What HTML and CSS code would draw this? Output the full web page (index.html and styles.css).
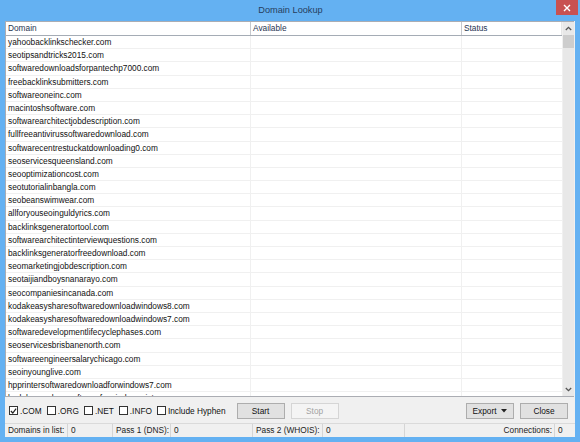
FILE: index.html
```html
<!DOCTYPE html>
<html>
<head>
<meta charset="utf-8">
<link rel="stylesheet" href="styles.css">
</head>
<body>
<div class="window">
  <div class="titlebar">
    <span></span>
    <span class="title">Domain Lookup</span>
    <span class="close"><svg width="8" height="8" viewBox="0 0 8 8"><path d="M1 1L7 7M7 1L1 7" stroke="#fff" stroke-width="1.4"/></svg></span>
  </div>
  <div class="client">
    <div class="list">
      <div class="grid">
        <div class="row head"><div class="cell">Domain</div><div class="cell">Available</div><div class="cell">Status</div></div>
        <div class="row"><div class="cell">yahoobacklinkschecker.com</div><div class="cell"></div><div class="cell"></div></div>
        <div class="row"><div class="cell">seotipsandtricks2015.com</div><div class="cell"></div><div class="cell"></div></div>
        <div class="row"><div class="cell">softwaredownloadsforpantechp7000.com</div><div class="cell"></div><div class="cell"></div></div>
        <div class="row"><div class="cell">freebacklinksubmitters.com</div><div class="cell"></div><div class="cell"></div></div>
        <div class="row"><div class="cell">softwareoneinc.com</div><div class="cell"></div><div class="cell"></div></div>
        <div class="row"><div class="cell">macintoshsoftware.com</div><div class="cell"></div><div class="cell"></div></div>
        <div class="row"><div class="cell">softwarearchitectjobdescription.com</div><div class="cell"></div><div class="cell"></div></div>
        <div class="row"><div class="cell">fullfreeantivirussoftwaredownload.com</div><div class="cell"></div><div class="cell"></div></div>
        <div class="row"><div class="cell">softwarecentrestuckatdownloading0.com</div><div class="cell"></div><div class="cell"></div></div>
        <div class="row"><div class="cell">seoservicesqueensland.com</div><div class="cell"></div><div class="cell"></div></div>
        <div class="row"><div class="cell">seooptimizationcost.com</div><div class="cell"></div><div class="cell"></div></div>
        <div class="row"><div class="cell">seotutorialinbangla.com</div><div class="cell"></div><div class="cell"></div></div>
        <div class="row"><div class="cell">seobeanswimwear.com</div><div class="cell"></div><div class="cell"></div></div>
        <div class="row"><div class="cell">allforyouseoinguldyrics.com</div><div class="cell"></div><div class="cell"></div></div>
        <div class="row"><div class="cell">backlinksgeneratortool.com</div><div class="cell"></div><div class="cell"></div></div>
        <div class="row"><div class="cell">softwarearchitectinterviewquestions.com</div><div class="cell"></div><div class="cell"></div></div>
        <div class="row"><div class="cell">backlinksgeneratorfreedownload.com</div><div class="cell"></div><div class="cell"></div></div>
        <div class="row"><div class="cell">seomarketingjobdescription.com</div><div class="cell"></div><div class="cell"></div></div>
        <div class="row"><div class="cell">seotaijiandboysnanarayo.com</div><div class="cell"></div><div class="cell"></div></div>
        <div class="row"><div class="cell">seocompaniesincanada.com</div><div class="cell"></div><div class="cell"></div></div>
        <div class="row"><div class="cell">kodakeasysharesoftwaredownloadwindows8.com</div><div class="cell"></div><div class="cell"></div></div>
        <div class="row"><div class="cell">kodakeasysharesoftwaredownloadwindows7.com</div><div class="cell"></div><div class="cell"></div></div>
        <div class="row"><div class="cell">softwaredevelopmentlifecyclephases.com</div><div class="cell"></div><div class="cell"></div></div>
        <div class="row"><div class="cell">seoservicesbrisbanenorth.com</div><div class="cell"></div><div class="cell"></div></div>
        <div class="row"><div class="cell">softwareengineersalarychicago.com</div><div class="cell"></div><div class="cell"></div></div>
        <div class="row"><div class="cell">seoinyounglive.com</div><div class="cell"></div><div class="cell"></div></div>
        <div class="row"><div class="cell">hpprintersoftwaredownloadforwindows7.com</div><div class="cell"></div><div class="cell"></div></div>
        <div class="row"><div class="cell">kodakeasysharesoftwareforwindowsvista.com</div><div class="cell"></div><div class="cell"></div></div>
      </div>
      <div class="vscroll">
        <div class="arrow"><svg width="7" height="5" viewBox="0 0 7 5"><path d="M0.8 4L3.5 1.3L6.2 4" fill="none" stroke="#555" stroke-width="1.3"/></svg></div>
        <div class="thumb"></div>
        <div class="track"></div>
        <div class="arrow"><svg width="7" height="5" viewBox="0 0 7 5"><path d="M0.8 1L3.5 3.7L6.2 1" fill="none" stroke="#555" stroke-width="1.3"/></svg></div>
      </div>
    </div>
    <div class="controls">
      <label class="chk"><span class="box"><svg width="8" height="8" viewBox="0 0 8 8"><path d="M1 4L3.2 6.3L7 1.2" fill="none" stroke="#222" stroke-width="1.4"/></svg></span>.COM</label>
      <label class="chk"><span class="box"></span>.ORG</label>
      <label class="chk"><span class="box"></span>.NET</label>
      <label class="chk"><span class="box"></span>.INFO</label>
      <label class="chk"><span class="box"></span>Include Hyphen</label>
      <div class="btn start">Start</div>
      <div class="btn disabled">Stop</div>
      <div class="btn export">Export <svg width="6" height="4" viewBox="0 0 6 4"><path d="M0 0H6L3 3.5Z" fill="#222"/></svg></div>
      <div class="btn">Close</div>
    </div>
    <div class="status">
      <div class="panel">Domains in list:</div>
      <div class="panel">0</div>
      <div class="panel">Pass 1 (DNS):</div>
      <div class="panel">0</div>
      <div class="panel">Pass 2 (WHOIS):</div>
      <div class="panel">0</div>
      <div class="panel right">Connections:</div>
      <div class="panel last">0</div>
    </div>
  </div>
</div>
</body>
</html>
```

FILE: styles.css
```css
* { box-sizing: border-box; }
html, body { margin: 0; padding: 0; }
body {
  font-family: "Liberation Sans", Arial, sans-serif;
  font-size: 8.3px;
  color: #111;
  background: #fff;
}
.window {
  width: 580px;
  height: 442px;
  background: #64b1f2;
  display: flex;
  flex-direction: column;
}
.titlebar {
  height: 21px;
  display: grid;
  grid-template-columns: 1fr auto 1fr;
  align-items: start;
}
.title {
  font-size: 9.2px;
  color: #26405e;
  line-height: 21px;
  padding-left: 1px;
}
.close {
  justify-self: end;
  width: 22px;
  height: 15px;
  margin-right: 2px;
  background: #c85151;
  display: flex;
  align-items: center;
  justify-content: center;
}
.client {
  flex: 1;
  margin: 0 5px 5px 5px;
  background: #f0f0f0;
  display: flex;
  flex-direction: column;
}
.list {
  height: 376px;
  background: #fff;
  border: 1px solid #abadb3;
  border-right-width: 0;
  display: flex;
  overflow: hidden;
  margin-right: 1px;
}
.grid {
  flex: 1;
  overflow: hidden;
}
.row {
  display: grid;
  grid-template-columns: 245px 211px 1fr;
  height: 13.2px;
  border-bottom: 1px solid #f0f0f0;
}
.row .cell {
  padding-left: 2px;
  line-height: 12.2px;
  white-space: nowrap;
  overflow: hidden;
  border-right: 1px solid #f0f0f0;
}
.row .cell:last-child { border-right: 0; }
.row.head {
  height: 14px;
  border-bottom: 1px solid #a5acb5;
  color: #1f3552;
}
.row.head .cell {
  line-height: 13px;
  border-right: 1px solid #c6c9ce;
}
.row.head .cell:last-child { border-right: 1px solid #e6e6e6; }
.vscroll {
  width: 12px;
  background: #e8e8e8;
  display: flex;
  flex-direction: column;
  border-left: 1px solid #f0f0f0;
}
.arrow {
  height: 13px;
  display: flex;
  align-items: center;
  justify-content: center;
  background: #e8e8e8;
}
.thumb {
  height: 13px;
  background: #cdcdcd;
}
.track { flex: 1; }
.controls {
  height: 26px;
  display: flex;
  align-items: center;
  padding: 1px 7px 0 4px;
  color: #111;
}
.chk {
  display: flex;
  align-items: center;
  margin-right: 5px;
  gap: 2px;
}
.box {
  width: 9px;
  height: 9px;
  border: 1px solid #333;
  background: #fff;
  display: flex;
  align-items: center;
  justify-content: center;
}
.btn {
  width: 48px;
  height: 16px;
  background: #e1e1e1;
  border: 1px solid #adadad;
  display: flex;
  align-items: center;
  justify-content: center;
  gap: 5px;
  margin-left: 6px;
}
.start { margin-left: 6px; }
.btn.disabled {
  background: #f4f4f4;
  border-color: #d5d5d5;
  color: #a3a3a3;
}
.export { margin-left: auto; }
.status {
  height: 14px;
  display: grid;
  grid-template-columns: 63px 45px 58px 82px 70px 82px 150px 20px;
  border-top: 1px solid #dadada;
  color: #222;
}
.panel {
  padding-left: 3px;
  line-height: 13px;
  border-right: 1px solid #d5d5d5;
  white-space: nowrap;
  overflow: hidden;
}
.panel.right { text-align: right; padding-right: 2px; }
.panel.last { border-right: 0; }
```
